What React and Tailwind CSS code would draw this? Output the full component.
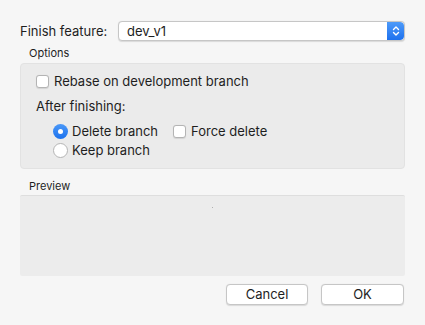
function Checkbox() {
  return <span className="inline-block w-[13px] h-[13px] rounded-[3px] bg-white border border-[#b4b4b4] shadow-[0_0.5px_1px_rgba(0,0,0,0.1)]" />;
}

function Radio({ checked }) {
  if (checked) {
    return (
      <span className="w-[15px] h-[15px] rounded-full bg-gradient-to-b from-[#4a98f8] to-[#1b72ed] flex items-center justify-center">
        <span className="w-[5px] h-[5px] rounded-full bg-white" />
      </span>
    );
  }
  return <span className="inline-block w-[15px] h-[15px] rounded-full bg-white border border-[#b4b4b4]" />;
}

function Stepper() {
  return (
    <div className="w-[17px] h-full rounded-r-[4px] bg-gradient-to-b from-[#4d9af9] to-[#1d71ee] flex items-center justify-center">
      <svg width="8" height="12" viewBox="0 0 8 12" fill="none" stroke="white" strokeWidth="1.4" strokeLinecap="round" strokeLinejoin="round">
        <path d="M1.5 4.5 L4 2 L6.5 4.5" />
        <path d="M1.5 7.5 L4 10 L6.5 7.5" />
      </svg>
    </div>
  );
}

export default function App() {
  return (
    <div className="w-[425px] h-[325px] bg-[#f6f6f6] text-[#1e1e1e] px-5 pt-[21px] font-['Inter','Liberation_Sans',sans-serif] text-[13px] leading-none">
      <div className="flex items-center h-[20px]">
        <span className="w-[98px]">Finish feature:</span>
        <div className="flex-1 h-[20px] flex bg-white border border-[#c6c6c6] rounded-[4px] shadow-[0_0.5px_1px_rgba(0,0,0,0.12)] overflow-hidden">
          <span className="flex-1 flex items-center pl-[8px]">dev_v1</span>
          <Stepper />
        </div>
      </div>

      <div className="pl-[9px] text-[11px] h-[22px] flex items-end pb-[4px]">Options</div>
      <div className="h-[106px] bg-[#ebebeb] border border-[#e2e2e2] rounded-[4px] pl-[15px] pt-[11px]">
        <div className="flex items-center gap-[5px] h-[13px]">
          <Checkbox />
          <span>Rebase on development branch</span>
        </div>
        <div className="h-[13px] mt-[12px] flex items-center">After finishing:</div>
        <div className="mt-[11px] pl-[17px] flex flex-col gap-[4px]">
          <div className="flex items-center h-[15px]">
            <Radio checked />
            <span className="ml-[4px]">Delete branch</span>
            <span className="ml-[15px] flex items-center gap-[5px]">
              <Checkbox />
              <span>Force delete</span>
            </span>
          </div>
          <div className="flex items-center h-[15px]">
            <Radio />
            <span className="ml-[4px]">Keep branch</span>
          </div>
        </div>
      </div>

      <div className="pl-[9px] text-[11px] h-[26px] flex items-end pb-[3px]">Preview</div>
      <div className="h-[81px] bg-[#ececec] border-t border-[#dedede] rounded-[2px] flex justify-center pt-[11px]">
        <span className="w-[1px] h-[1px] bg-[#b0b0b0]" />
      </div>

      <div className="flex justify-end gap-[13px] mt-[8px] pr-[1px]">
        <button className="w-[82px] h-[21px] bg-white border border-[#c6c6c6] rounded-[4px] shadow-[0_0.5px_1px_rgba(0,0,0,0.12)] text-[13px]">Cancel</button>
        <button className="w-[83px] h-[21px] bg-white border border-[#c6c6c6] rounded-[4px] shadow-[0_0.5px_1px_rgba(0,0,0,0.12)] text-[13px]">OK</button>
      </div>
    </div>
  );
}
